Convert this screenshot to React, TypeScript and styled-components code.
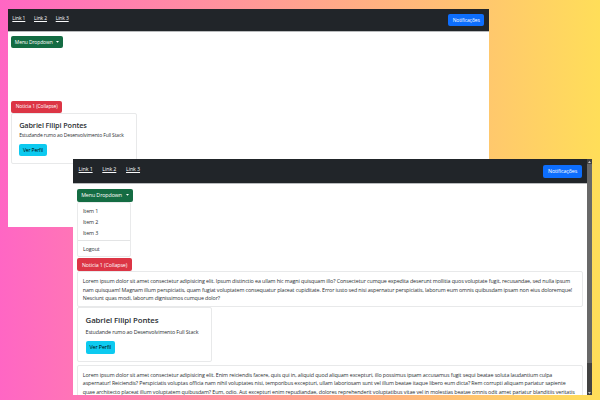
import React from "react";
import styled, { createGlobalStyle } from "styled-components";

const GlobalStyle = createGlobalStyle`
  *, *::before, *::after { box-sizing: border-box; }
  html, body { margin: 0; padding: 0; overflow: hidden; }
`;

const Desktop = styled.main`
  position: relative;
  width: 600px;
  height: 400px;
  overflow: hidden;
  background: linear-gradient(90deg, #ff66c4, #ffde59);
  font-family: "Open Sans", "Noto Sans", sans-serif;
  color: #2c3034;
`;

const Window = styled.section<{ $x: number; $y: number; $w: number; $h: number; $size: number }>`
  position: absolute;
  left: ${(p) => p.$x}px;
  top: ${(p) => p.$y}px;
  width: ${(p) => p.$w}px;
  height: ${(p) => p.$h}px;
  display: flex;
  overflow: hidden;
  background: #fff;
  font-size: ${(p) => p.$size}px;
  letter-spacing: -0.02em;
`;

const Page = styled.div`
  flex: 1;
  min-width: 0;
`;

const Navbar = styled.nav<{ $h: number }>`
  display: flex;
  justify-content: space-between;
  align-items: flex-start;
  height: ${(p) => p.$h}px;
  padding: 1.02em 0.97em 0 0.97em;
  background: #212529;
  box-shadow: 0 1px 0 #b9bbbd;
`;

const Links = styled.div<{ $gap: number }>`
  display: flex;
  gap: ${(p) => p.$gap}px;
  padding-top: 0.1em;
`;

const NavLink = styled.a`
  color: #f8f9fa;
  line-height: 1.5;
  text-decoration: underline;
  text-decoration-thickness: 0.5px;
  white-space: nowrap;
`;

const tones = {
  primary: ["#0d6efd", "#fff"],
  success: ["#146c43", "#fff"],
  danger: ["#dc3545", "#fff"],
  info: ["#0dcaf0", "#000"],
};

const Button = styled.button<{ $tone: keyof typeof tones; $w: number; $h: number }>`
  display: flex;
  align-items: center;
  justify-content: center;
  gap: 0.7em;
  width: ${(p) => p.$w}px;
  height: ${(p) => p.$h}px;
  padding: 0.08em 0 0;
  border: 0;
  border-radius: 2px;
  background: ${(p) => tones[p.$tone][0]};
  color: ${(p) => tones[p.$tone][1]};
  font: inherit;
  letter-spacing: inherit;
  line-height: 1;
  white-space: nowrap;
`;

const CaretIcon = styled.svg`
  width: 3px;
  height: 2px;
  margin-bottom: 0.8px;
  fill: #fff;
`;

const Body = styled.div<{ $top: number }>`
  display: flex;
  flex-direction: column;
  align-items: flex-start;
  padding: ${(p) => p.$top}px 4px 0 3.8px;
`;

const MenuSlot = styled.div<{ $h: number }>`
  height: ${(p) => p.$h}px;
`;

const Menu = styled.div`
  width: 54.3px;
  height: 54.6px;
  padding-top: 3px;
  border: 1px solid #e9eaeb;
  border-radius: 2px;
`;

const MenuItem = styled.div`
  height: 10.9px;
  padding-left: 4.8px;
  line-height: 10.9px;
`;

const Divider = styled.hr`
  height: 1px;
  margin: 1.8px 0 2.6px;
  border: 0;
  background: #e3e4e5;
`;

const TextBox = styled.div<{ $mt?: number; $pt: number }>`
  width: 505.8px;
  height: 35.4px;
  margin-top: ${(p) => p.$mt ?? 0}px;
  padding: ${(p) => p.$pt}px 0 0 4.6px;
  border: 1px solid #e8e9ea;
  border-radius: 2px;
`;

const Line = styled.div`
  height: 8.2px;
  line-height: 8.2px;
  white-space: nowrap;
`;

const Card = styled.article<{ $w: number; $h: number }>`
  width: ${(p) => p.$w}px;
  height: ${(p) => p.$h}px;
  padding: 1.52em 0 0 1.38em;
  border: 1px solid #e8e9ea;
  border-radius: 2px;
`;

const CardTitle = styled.h5`
  margin: 0;
  font-size: 1.47em;
  font-weight: 600;
  line-height: 1.2;
  letter-spacing: -0.016em;
  white-space: nowrap;
`;

const CardText = styled.p`
  margin: 0.5em 0 0.92em;
  line-height: 1.5;
  letter-spacing: -0.024em;
  white-space: nowrap;
`;

const Scrollbar = styled.div`
  display: flex;
  flex-direction: column;
  align-items: center;
  justify-content: space-between;
  width: 5px;
  background: #424242;
`;

const ArrowIcon = styled.svg`
  width: 3px;
  height: 2px;
  margin: 1.5px 0;
  fill: #c4c4c4;
`;

const Thumb = styled.div`
  width: 5px;
  height: 199px;
  margin-bottom: auto;
  background: #686868;
`;

const navLinks = ["Link 1", "Link 2", "Link 3"];

const paragraphOne = [
  "Lorem ipsum dolor sit amet consectetur adipisicing elit. Ipsum distinctio ea ullam hic magni quisquam illo? Consectetur cumque expedita deserunt mollitia quos voluptate fugit, recusandae, sed nulla ipsum",
  "nam quisquam! Magnam illum perspiciatis, quam fugiat voluptatem consequatur placeat cupiditate. Error iusto sed nisi aspernatur perspiciatis, laborum eum omnis quibusdam ipsam non eius doloremque!",
  "Nesciunt quas modi, laborum dignissimos cumque dolor?",
];

const paragraphTwo = [
  "Lorem ipsum dolor sit amet consectetur adipisicing elit. Enim reiciendis facere, quis qui in, aliquid quod aliquam excepturi, illo possimus ipsam accusamus fugit sequi beatae soluta laudantium culpa",
  "aspernatur! Reiciendis? Perspiciatis voluptas officia nam nihil voluptates nisi, temporibus excepturi, ullam laboriosam sunt vel illum beatae itaque libero eum dicta? Rem corrupti aliquam pariatur sapiente",
  "quae architecto placeat illum voluptatem quibusdam? Eum, odio. Aut excepturi enim repudiandae, dolores reprehenderit voluptatibus vitae vel in molestias beatae omnis odit amet pariatur blanditiis veritatis",
];

function Caret() {
  return (
    <CaretIcon viewBox="0 0 6 4">
      <path d="M0 0h6L3 3.6z" />
    </CaretIcon>
  );
}

function Header({ h, gap, bw, bh }: { h: number; gap: number; bw: number; bh: number }) {
  return (
    <Navbar $h={h}>
      <Links $gap={gap}>
        {navLinks.map((l) => (
          <NavLink key={l}>{l}</NavLink>
        ))}
      </Links>
      <Button $tone="primary" $w={bw} $h={bh}>Notificações</Button>
    </Navbar>
  );
}

function Profile({ w, h, bw, bh }: { w: number; h: number; bw: number; bh: number }) {
  return (
    <Card $w={w} $h={h}>
      <CardTitle>Gabriel Filipi Pontes</CardTitle>
      <CardText>Estudande rumo ao Desenvolvimento Full Stack</CardText>
      <Button $tone="info" $w={bw} $h={bh}>Ver Perfil</Button>
    </Card>
  );
}

export default function App() {
  return (
    <>
      <GlobalStyle />
      <Desktop>
        <Window $x={7.5} $y={9} $w={481.3} $h={218} $size={4.97}>
          <Page>
            <Header h={22} gap={8.7} bw={35.6} bh={12} />
            <Body $top={5}>
              <Button $tone="success" $w={51.4} $h={12}>
                Menu Dropdown <Caret />
              </Button>
              <MenuSlot $h={52.5} />
              <Button $tone="danger" $w={50.8} $h={12}>Noticia 1 (Collapse)</Button>
              <Profile w={125.3} h={51.2} bw={27.7} bh={12} />
            </Body>
          </Page>
        </Window>
        <Window $x={73.4} $y={159.3} $w={518.6} $h={236.2} $size={5.35}>
          <Page>
            <Header h={24} gap={9.7} bw={38.4} bh={13} />
            <Body $top={5.7}>
              <Button $tone="success" $w={55.5} $h={13}>
                Menu Dropdown <Caret />
              </Button>
              <MenuSlot $h={56.5}>
                <Menu>
                  <MenuItem>Item 1</MenuItem>
                  <MenuItem>Item 2</MenuItem>
                  <MenuItem>Item 3</MenuItem>
                  <Divider />
                  <MenuItem>Logout</MenuItem>
                </Menu>
              </MenuSlot>
              <Button $tone="danger" $w={54.8} $h={13}>Noticia 1 (Collapse)</Button>
              <TextBox $pt={4.9}>
                {paragraphOne.map((t) => (
                  <Line key={t}>{t}</Line>
                ))}
              </TextBox>
              <Profile w={135.3} h={55.5} bw={29.5} bh={13} />
              <TextBox $mt={2.6} $pt={5.2}>
                {paragraphTwo.map((t) => (
                  <Line key={t}>{t}</Line>
                ))}
              </TextBox>
            </Body>
          </Page>
          <Scrollbar>
            <ArrowIcon viewBox="0 0 6 4">
              <path d="M0 4h6L3 0z" />
            </ArrowIcon>
            <Thumb />
            <ArrowIcon viewBox="0 0 6 4">
              <path d="M0 0h6L3 4z" />
            </ArrowIcon>
          </Scrollbar>
        </Window>
      </Desktop>
    </>
  );
}
